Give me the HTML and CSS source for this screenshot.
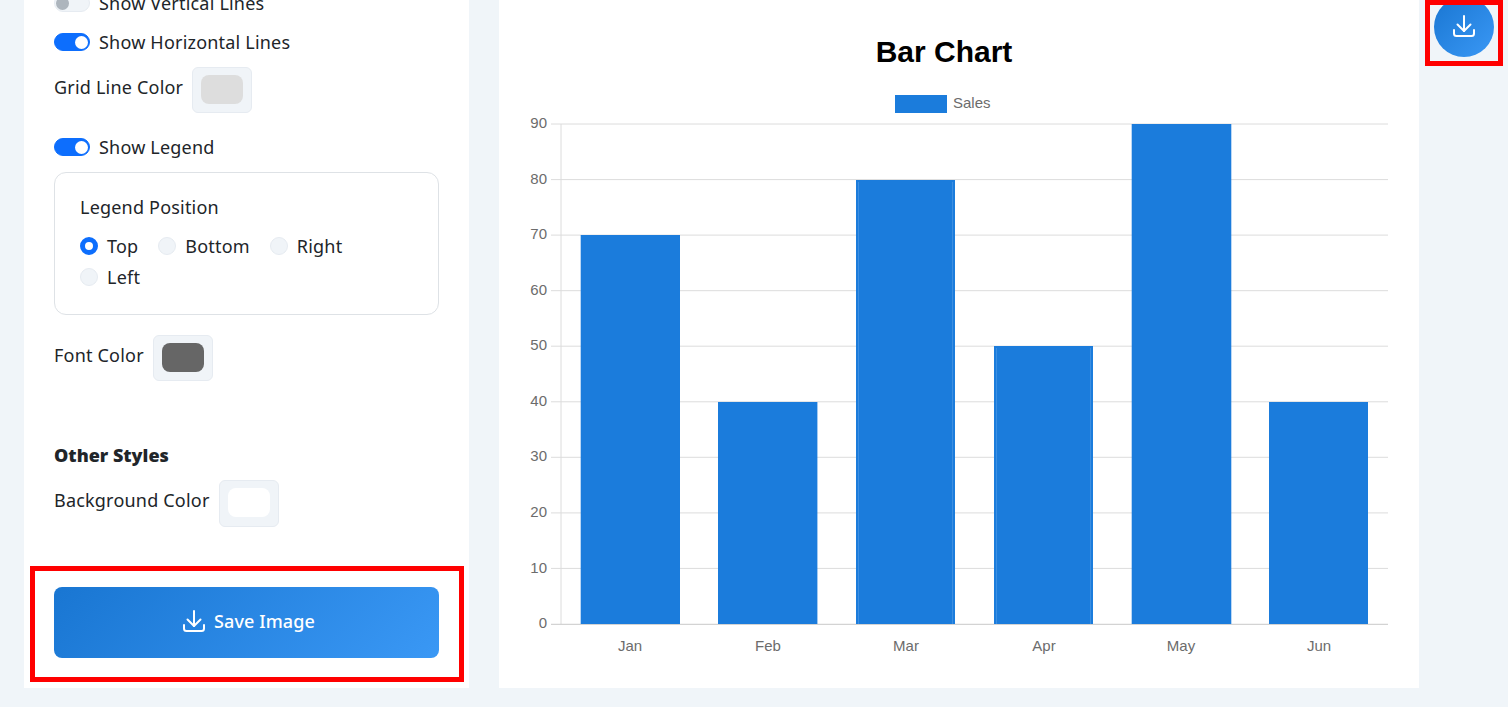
FILE: index.html
```html
<!DOCTYPE html>
<html lang="en">
<head>
<meta charset="utf-8">
<title>Bar Chart</title>
<link rel="stylesheet" href="styles.css">
</head>
<body>
<div class="page">
  <aside class="sidebar">
    <div class="controls">
      <div class="row toggle-row first-toggle"><span class="toggle"></span><span>Show Vertical Lines</span></div>
      <div class="row toggle-row"><span class="toggle on"></span><span>Show Horizontal Lines</span></div>
      <div class="row swatch-row"><span class="swatch-label">Grid Line Color</span><span class="swatch"><span class="chip chip-grid"></span></span></div>
      <div class="row toggle-row legend-toggle"><span class="toggle on"></span><span>Show Legend</span></div>
      <div class="legend-box">
        <div class="legend-title">Legend Position</div>
        <div class="radios">
          <label class="radio-item"><span class="radio checked"></span>Top</label>
          <label class="radio-item"><span class="radio"></span>Bottom</label>
          <label class="radio-item"><span class="radio"></span>Right</label>
          <label class="radio-item"><span class="radio"></span>Left</label>
        </div>
      </div>
      <div class="row swatch-row font-row"><span class="swatch-label">Font Color</span><span class="swatch"><span class="chip chip-font"></span></span></div>
      <h3 class="section-title">Other Styles</h3>
      <div class="row swatch-row bg-row"><span class="swatch-label">Background Color</span><span class="swatch"><span class="chip chip-bg"></span></span></div>
    </div>
    <div class="save-frame">
      <button class="save-btn" type="button">
        <svg class="dl-icon" viewBox="0 0 24 24" width="24" height="24" fill="none" stroke="currentColor" stroke-width="2" stroke-linecap="round" stroke-linejoin="round"><path d="M12 2v15"/><path d="M5.500 10.500l6.500 6.500 6.500-6.500"/><path d="M2 16v3.500a2.500 2.500 0 0 0 2.500 2.500h15a2.500 2.500 0 0 0 2.500-2.500v-3.500"/></svg>
        <span>Save Image</span>
      </button>
    </div>
  </aside>
  <main class="chart-card">
    <svg class="chart" viewBox="499 0 920 688" width="920" height="688">
      <text class="title" x="944" y="62">Bar Chart</text>
      <rect class="bar" x="895" y="95" width="52" height="18"/>
      <text class="tick" x="953" y="108">Sales</text>
      <g class="grid">
        <path d="M551 124H1388"/><path d="M551 179.600H1388"/><path d="M551 235.100H1388"/><path d="M551 290.700H1388"/><path d="M551 346.200H1388"/><path d="M551 401.800H1388"/><path d="M551 457.300H1388"/><path d="M551 512.900H1388"/><path d="M551 568.400H1388"/>
        <path d="M561 124V624"/>
      </g>
      <path class="axis" d="M551 624.300H1388"/>
      <g class="ylabels">
        <text x="547" y="128">90</text><text x="547" y="184">80</text><text x="547" y="239">70</text><text x="547" y="295">60</text><text x="547" y="350">50</text><text x="547" y="406">40</text><text x="547" y="461">30</text><text x="547" y="517">20</text><text x="547" y="573">10</text><text x="547" y="628">0</text>
      </g>
      <rect class="bar" x="580.700" y="235" width="99.300" height="389"/>
      <rect class="bar" x="718" y="402" width="99.400" height="222"/>
      <rect class="bar" x="856" y="180" width="99" height="444"/>
      <path class="bar-line" d="M858.500 182V624M952.500 182V624"/>
      <rect class="bar" x="994" y="346" width="99" height="278"/>
      <path class="bar-line" d="M996.500 348V624M1090.500 348V624"/>
      <rect class="bar" x="1131.700" y="124" width="99.600" height="500"/>
      <rect class="bar" x="1269" y="402" width="99" height="222"/>
      <g class="xlabels">
        <text x="630" y="651">Jan</text><text x="768" y="651">Feb</text><text x="906" y="651">Mar</text><text x="1044" y="651">Apr</text><text x="1181" y="651">May</text><text x="1319" y="651">Jun</text>
      </g>
    </svg>
  </main>
  <div class="fab-frame">
    <button class="fab" type="button">
      <svg viewBox="0 0 24 24" width="24" height="24" fill="none" stroke="currentColor" stroke-width="2" stroke-linecap="round" stroke-linejoin="round"><path d="M12 2v15"/><path d="M5.500 10.500l6.500 6.500 6.500-6.500"/><path d="M2 16v3.500a2.500 2.500 0 0 0 2.500 2.500h15a2.500 2.500 0 0 0 2.500-2.500v-3.500"/></svg>
    </button>
  </div>
</div>
</body>
</html>
```

FILE: styles.css
```css
* { box-sizing: border-box; }
html, body { margin: 0; height: 100%; overflow: hidden; }
body {
  background: #f0f5f9;
  font-family: "Noto Sans", sans-serif;
  font-size: 18px;
  letter-spacing: 0.2px;
  line-height: 24px;
  color: #212529;
}
.page {
  display: flex;
  align-items: stretch;
  height: 688px;
  padding-left: 24px;
}
.sidebar {
  width: 445px;
  flex: none;
  background: #fff;
  display: flex;
  flex-direction: column;
  justify-content: flex-end;
  overflow: hidden;
  padding: 0 5px 6px 6px;
}
.controls { padding: 0 25px 0 24px; flex: none; }
.row { display: flex; align-items: center; }
.toggle-row { gap: 9px; height: 24px; margin-bottom: 13px; }
.first-toggle { margin-bottom: 15px; }
.toggle {
  width: 36px;
  height: 18px;
  border-radius: 9px;
  background: #f0f4f8;
  border: 1px solid #e6ebf1;
  position: relative;
  flex: none;
}
.toggle::after {
  content: "";
  position: absolute;
  left: 1px;
  top: 1.500px;
  width: 13px;
  height: 13px;
  border-radius: 50%;
  background: #adb5bd;
}
.toggle.on { background: #0d6efd; border-color: #0d6efd; }
.toggle.on::after { left: 20px; background: #fff; }
.swatch-row { gap: 9px; }
.swatch-label { position: relative; top: -3px; }
.swatch {
  width: 60px;
  height: 46px;
  flex: none;
  background: #f0f4f8;
  border: 1px solid #e6ebf1;
  border-radius: 6px;
  padding: 7px 8px;
  display: flex;
}
.chip { width: 43px; height: 29px; border-radius: 8px; display: block; }
.chip-grid { background: #dddddd; }
.chip-font { background: #666666; }
.chip-bg { background: #ffffff; }
.legend-toggle { margin-top: 22px; }
.legend-box {
  border: 1px solid #dee2e6;
  border-radius: 12px;
  height: 143px;
  padding: 22px 25px 25px;
}
.legend-title { margin-bottom: 15px; }
.radios { display: flex; flex-wrap: wrap; gap: 7px 20px; }
.radio-item { display: flex; align-items: center; gap: 9px; height: 24px; }
.radio {
  width: 18px;
  height: 18px;
  border-radius: 50%;
  background: #f0f4f8;
  border: 1px solid #e6ebf1;
  flex: none;
}
.radio.checked { background: #fff; border: 5px solid #0d6efd; }
.font-row { margin-top: 20px; }
.section-title {
  margin: 62px 0 13px;
  font-size: 18px;
  line-height: 24px;
  font-weight: 900;
  letter-spacing: 0;
}
.bg-row .swatch { height: 47px; }
.bg-row .swatch-label { top: -4px; }
.save-frame {
  flex: none;
  margin-top: 39px;
  height: 116px;
  border: 5px solid #ff0000;
  padding: 16px 20px 19px 19px;
}
.save-btn, .fab {
  border: 0;
  color: #fff;
  background: linear-gradient(135deg, #1976d2, #3a98f5);
  font: inherit;
  letter-spacing: inherit;
  padding: 0;
  display: flex;
  align-items: center;
  justify-content: center;
}
.save-btn {
  width: 100%;
  height: 71px;
  border-radius: 8px;
  gap: 8px;
  font-weight: 500;
  letter-spacing: 0.1px;
  padding: 0 0 4px 4px;
}
.chart-card {
  margin-left: 30px;
  width: 920px;
  flex: none;
  background: #fff;
}
.chart { display: block; }
.chart text { font-family: "Liberation Sans", Arial, sans-serif; font-size: 15px; letter-spacing: 0; fill: #6c6c6c; }
.chart .title { font-size: 30px; font-weight: 700; fill: #000; text-anchor: middle; }
.ylabels text { text-anchor: end; }
.xlabels text { text-anchor: middle; }
.grid path { stroke: #dcdcdc; stroke-width: 1; fill: none; }
.axis { stroke: #c8c8c8; stroke-width: 1; fill: none; }
.bar { fill: #1b7cdc; }
.bar-line { stroke: #4a97e4; stroke-width: 1; fill: none; opacity: 0.7; }
.fab-frame {
  margin-left: 6px;
  width: 78px;
  height: 66px;
  flex: none;
  border: 5px solid #ff0000;
  padding-left: 4px;
  overflow: hidden;
}
.fab {
  width: 60px;
  height: 60px;
  border-radius: 50%;
  margin-top: -8px;
  padding-bottom: 3px;
}
```
